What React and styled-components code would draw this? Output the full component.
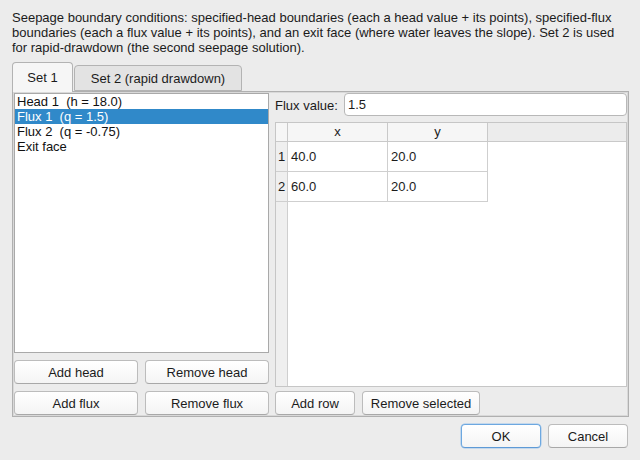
import React from "react";
import styled, { createGlobalStyle } from "styled-components";

const Global = createGlobalStyle`
  html, body { margin: 0; padding: 0; background: #ececec; }
  body { font-family: "Liberation Sans", Arial, sans-serif; font-size: 13px; color: #1b1b1b; }
  * { box-sizing: border-box; }
`;

const Window = styled.div`
  width: 640px;
  height: 460px;
  padding: 10px 12px 0 12px;
  display: flex;
  flex-direction: column;
  background: #ececec;
`;

const Description = styled.p`
  margin: 0;
  line-height: 15px;
  font-size: 13px;
  white-space: nowrap;
`;

const TabBar = styled.div`
  margin-top: 7px;
  height: 29px;
  display: flex;
  align-items: flex-end;
  position: relative;
  z-index: 1;
`;

const Tab = styled.div`
  height: ${(p) => (p.$active ? "30px" : "26px")};
  margin-bottom: ${(p) => (p.$active ? "-1px" : "0")};
  padding: 0 ${(p) => (p.$pad || 14)}px;
  display: flex;
  align-items: center;
  justify-content: center;
  border: 1px solid #b3b3b3;
  border-bottom: ${(p) => (p.$active ? "none" : "1px solid #b3b3b3")};
  border-radius: 4px 4px 0 0;
  background: ${(p) => (p.$active ? "#f6f6f6" : "#e3e3e3")};
  width: ${(p) => p.$w}px;
  margin-left: ${(p) => (p.$first ? 0 : 1)}px;
  padding-top: ${(p) => (p.$active ? 0 : 1)}px;
  font-size: 13px;
`;

const Pane = styled.div`
  width: 617px;
  height: 326px;
  border: 1px solid #b0b0b0;
  box-shadow: inset 0 0 0 1px #d9d9d9;
  padding: 1px 1px 1px 1px;
  display: flex;
  gap: 6px;
`;

const Column = styled.div`
  width: ${(p) => p.$w}px;
  display: flex;
  flex-direction: column;
`;

const ListBox = styled.div`
  height: 260px;
  background: #fff;
  border: 1px solid #a9a9a9;
  padding-top: 0;
`;

const ListItem = styled.div`
  height: 15px;
  line-height: 15px;
  padding-left: 2px;
  white-space: pre;
  background: ${(p) => (p.$selected ? "#3089c9" : "transparent")};
  color: ${(p) => (p.$selected ? "#fff" : "#111")};
`;

const ButtonRow = styled.div`
  display: flex;
  gap: 7px;
  margin-top: ${(p) => p.$mt ?? 7}px;
`;

const Button = styled.button`
  height: 24px;
  width: ${(p) => p.$w}px;
  font-family: inherit;
  font-size: 13px;
  color: #1b1b1b;
  background: linear-gradient(#ffffff, #f4f4f4);
  border: 1px solid ${(p) => (p.$primary ? "#6da8e0" : "#bcbcbc")};
  border-bottom-color: ${(p) => (p.$primary ? "#5e9ad6" : "#a8a8a8")};
  border-radius: 4px;
  padding: 0;
  box-shadow: ${(p) => (p.$primary ? "0 0 0 0.5px #9cc4ec" : "none")};
`;

const FieldRow = styled.div`
  display: flex;
  align-items: center;
  height: 23px;
`;

const FieldLabel = styled.span`
  width: 69px;
  padding-top: 1px;
`;

const TextInput = styled.div`
  flex: 1;
  height: 23px;
  background: #fff;
  border: 1px solid #b8b8b8;
  border-radius: 4px;
  padding: 0 3px;
  display: flex;
  align-items: center;
`;

const Table = styled.div`
  margin-top: 6px;
  height: 266px;
  border: 1px solid #c6c6c6;
  background: #fff;
  display: grid;
  grid-template-columns: 12px 100px 100px 1fr;
  grid-template-rows: 19px 30px 30px 1fr;
`;

const HeadCell = styled.div`
  background: ${(p) => (p.$blank ? "#ececec" : "#f6f6f6")};
  border-right: ${(p) => (p.$blank ? "none" : "1px solid #c9c9c9")};
  border-bottom: 1px solid #c9c9c9;
  display: flex;
  align-items: center;
  justify-content: center;
  font-size: 13px;
  padding-bottom: 1px;
`;

const RowHead = styled.div`
  background: #efefef;
  border-right: 1px solid #cfcfcf;
  border-bottom: ${(p) => (p.$last ? "none" : "1px solid #cfcfcf")};
  display: flex;
  align-items: center;
  justify-content: center;
  font-size: 13px;
`;

const Cell = styled.div`
  border-right: 1px solid #cfcfcf;
  border-bottom: 1px solid #cfcfcf;
  display: flex;
  align-items: center;
  padding-left: 3px;
  padding-bottom: 1px;
`;

const EmptyCell = styled.div`
  grid-column: ${(p) => p.$span || "auto"};
`;

const Footer = styled.div`
  display: flex;
  justify-content: flex-end;
  gap: 7px;
  margin-top: 7px;
`;

const items = [
  "Head 1  (h = 18.0)",
  "Flux 1  (q = 1.5)",
  "Flux 2  (q = -0.75)",
  "Exit face",
];

const rows = [
  ["40.0", "20.0"],
  ["60.0", "20.0"],
];

export default function App() {
  return (
    <>
      <Global />
      <Window>
        <Description>
          Seepage boundary conditions: specified-head boundaries (each a head value + its points), specified-flux
          <br />
          boundaries (each a flux value + its points), and an exit face (where water leaves the slope). Set 2 is used
          <br />
          for rapid-drawdown (the second seepage solution).
        </Description>
        <TabBar>
          <Tab $active $first $w={61}>Set 1</Tab>
          <Tab $w={168}>Set 2 (rapid drawdown)</Tab>
        </TabBar>
        <Pane>
          <Column $w={255}>
            <ListBox>
              {items.map((t, i) => (
                <ListItem key={t} $selected={i === 1}>{t}</ListItem>
              ))}
            </ListBox>
            <ButtonRow>
              <Button $w={124}>Add head</Button>
              <Button $w={124}>Remove head</Button>
            </ButtonRow>
            <ButtonRow>
              <Button $w={124}>Add flux</Button>
              <Button $w={124}>Remove flux</Button>
            </ButtonRow>
          </Column>
          <Column $w={352}>
            <FieldRow>
              <FieldLabel>Flux value:</FieldLabel>
              <TextInput>1.5</TextInput>
            </FieldRow>
            <Table>
              <HeadCell />
              <HeadCell>x</HeadCell>
              <HeadCell>y</HeadCell>
              <HeadCell $blank />
              {rows.map((r, i) => (
                <React.Fragment key={i}>
                  <RowHead>{i + 1}</RowHead>
                  <Cell>{r[0]}</Cell>
                  <Cell>{r[1]}</Cell>
                  <EmptyCell />
                </React.Fragment>
              ))}
              <RowHead $last />
              <EmptyCell $span="span 3" />
            </Table>
            <ButtonRow $mt={4}>
              <Button $w={80}>Add row</Button>
              <Button $w={118}>Remove selected</Button>
            </ButtonRow>
          </Column>
        </Pane>
        <Footer>
          <Button $w={80} $primary>OK</Button>
          <Button $w={80}>Cancel</Button>
        </Footer>
      </Window>
    </>
  );
}
